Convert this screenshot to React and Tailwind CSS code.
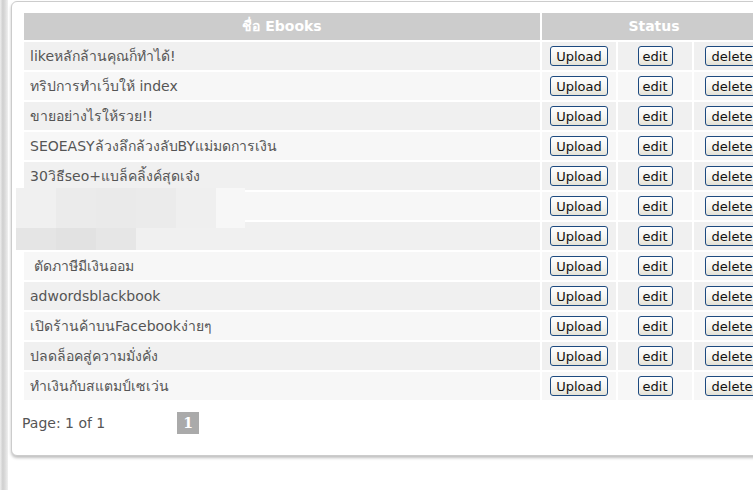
const books = [
  "likeหลักล้านคุณก็ทำได้!",
  "ทริปการทำเว็บให้ index",
  "ขายอย่างไรให้รวย!!",
  "SEOEASYล้วงลึกล้วงลับBYแม่มดการเงิน",
  "30วิธีseo+แบล็คลิ้งค์สุดเจ๋ง",
  "",
  "",
  "\u00a0ตัดภาษีมีเงินออม",
  "adwordsblackbook",
  "เปิดร้านค้าบนFacebookง่ายๆ",
  "ปลดล็อคสู่ความมั่งคั่ง",
  "ทำเงินกับสแตมป์เซเว่น",
]

function XpButton({ children, className }) {
  return (
    <button
      className={`h-[20px] rounded-[3px] border border-[#1d4a80] bg-[linear-gradient(#ffffff,#f4f3ee_60%,#e3e1d6)] text-[13px] leading-none text-[#111] ${className}`}
      style={{ fontFamily: '"DejaVu Sans", "Liberation Sans", sans-serif' }}
    >
      {children}
    </button>
  )
}

function Blur() {
  // ส่วนที่ถูกเบลอในภาพ
  const top = ["#f0f0f0", "#ebebeb", "#eaeaea", "#ebebeb", "#efefef", "#f7f7f7"]
  const bottom = ["#e5e5e5", "#e2e2e2", "#e6e6e6"]
  return (
    <div className="absolute left-[-8px] top-[-4px] flex flex-col">
      <div className="flex h-[40px]">
        {top.map((c, i) => (
          <div key={i} className={i === 5 ? "w-[29px]" : "w-[40px]"} style={{ background: c }} />
        ))}
      </div>
      <div className="flex h-[22px]">
        {bottom.map((c, i) => (
          <div key={i} className="w-[40px]" style={{ background: c }} />
        ))}
      </div>
    </div>
  )
}

export default function App() {
  return (
    <div className="flex h-[490px] w-[753px] overflow-hidden bg-white">
      {/* แถบซ้าย */}
      <div className="h-full w-[8px] shrink-0 bg-[linear-gradient(to_right,#eeeeee,#cfcfcf_35%,#dcdcdc_65%,#f0f0f0)]" />

      {/* การ์ดหลัก */}
      <div className="ml-[3px] mt-[1px] h-[455px] w-[790px] shrink-0 rounded-[6px] border border-[#cccccc] bg-white px-[10px] pt-[9px] shadow-[0_2px_3px_rgba(0,0,0,0.25)]">
        <table
          className="border-separate border-spacing-[2px] text-[14px] text-[#555]"
          style={{ fontFamily: '"DejaVu Sans", "Liberation Sans", "Noto Sans", sans-serif' }}
        >
          <thead>
            <tr className="h-[27px] bg-[#cccccc] text-[14px] font-bold text-white">
              <th className="w-[516px] p-0 text-center font-bold">ชื่อ Ebooks</th>
              <th colSpan={3} className="p-0 text-center font-bold">Status</th>
            </tr>
          </thead>
          <tbody>
            {books.map((name, i) => (
              <tr key={i} className={`h-[28px] ${i % 2 === 0 ? "bg-[#f0f0f0]" : "bg-[#f7f7f7]"}`}>
                <td className="relative whitespace-pre p-0 pl-[6px]">
                  {i === 5 && <Blur />}
                  {name}
                </td>
                <td className="w-[74px] p-0 pl-[8px]">
                  <XpButton className="w-[58px]">Upload</XpButton>
                </td>
                <td className="w-[74px] p-0 text-center">
                  <XpButton className="w-[35px]">edit</XpButton>
                </td>
                <td className="w-[72px] p-0 pl-[11px]">
                  <XpButton className="w-[54px]">delete</XpButton>
                </td>
              </tr>
            ))}
          </tbody>
        </table>

        {/* แบ่งหน้า */}
        <div className="mt-[10px] flex items-center text-[14px] text-[#555]" style={{ fontFamily: '"DejaVu Sans", "Liberation Sans", sans-serif' }}>
          <span className="w-[155px]">Page: 1 of 1</span>
          <span
            className="flex h-[22px] w-[22px] items-center justify-center bg-[#aaaaaa] text-[14px] font-bold text-white"
            style={{ fontFamily: '"DejaVu Serif", "Liberation Serif", serif' }}
          >
            1
          </span>
        </div>
      </div>
    </div>
  )
}
